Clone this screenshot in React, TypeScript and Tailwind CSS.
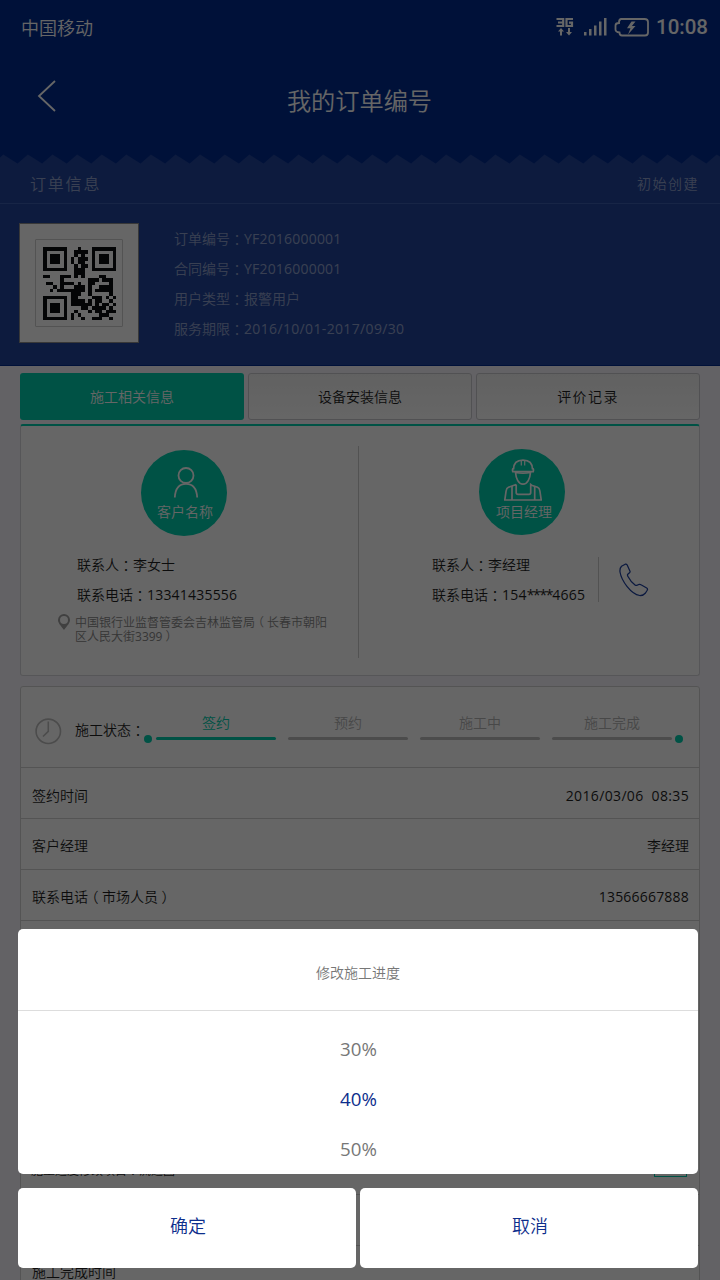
import React from "react";

const QR = [
  "111111100010001111111",
  "100000100111101000001",
  "101110100101001011101",
  "101110101011101011101",
  "101110101011001011101",
  "100000100101101000001",
  "111111100111001111111",
  "000000000111000000000",
  "110001110101000011000",
  "000001000000011101110",
  "011001111010011000010",
  "000101000111010011110",
  "001011111111010111110",
  "000000001110010000010",
  "111111101100001110101",
  "100000101111010110010",
  "101110101111110101101",
  "101110100001101111010",
  "101110100100010110111",
  "100000101010000011100",
  "111111101001001110010",
];

function Colon() {
  return <span className="mx-[0.25em] [font-feature-settings:'halt']">：</span>;
}

function Open() {
  return <span className="mx-[0.25em] [font-feature-settings:'halt']">（</span>;
}

function Close() {
  return <span className="mx-[0.25em] [font-feature-settings:'halt']">）</span>;
}

function Num({ children }: { children: React.ReactNode }) {
  return <span className="font-normal tracking-[0.200px]">{children}</span>;
}

function DateText({ children }: { children: React.ReactNode }) {
  return <span className="font-normal tracking-[0.350px]">{children}</span>;
}

function QrCode() {
  return (
    <div className="flex h-[120px] w-[120px] items-center justify-center border border-[#8c8c8c] bg-white">
      <div className="flex h-[88px] w-[88px] items-center justify-center rounded-[1px] border border-[#d0d0d0]">
        <svg width="73" height="73" viewBox="0 0 21 21" shapeRendering="crispEdges">
          {QR.map((row, y) =>
            row.split("").map((v, x) =>
              v === "1" ? <rect key={`${x}-${y}`} x={x} y={y} width="1.02" height="1.02" fill="#0a0d0f" /> : null
            )
          )}
        </svg>
      </div>
    </div>
  );
}

function zigzag() {
  let d = "M-21 10";
  for (let i = 0; i < 31; i++) {
    const peak = 3.3 + (i - 1) * 24.6;
    d += ` L${peak} 0.5 L${peak + 14.2} 9.6`;
  }
  return d + " L760 12 L-30 12 Z";
}

function StatusIcons() {
  return (
    <svg width="94" height="20" viewBox="0 0 94 20" fill="none" stroke="#fff">
      <g strokeWidth="2.200">
        <path d="M0.5 2H7.200V9H0.500M2 5.500H7" />
        <path d="M17 2H10.500V9H16V5.700H13" />
      </g>
      <g fill="#fff" stroke="none">
        <path d="M5 11l3 3.500H6V18.500H4V14.500H2z" />
        <path d="M13 18.500l3-3.500h-2V11h-2v4h-2z" />
        <path d="M28 15h2.500v3.500H28zM33 12h2.500v6.500H33zM38 8.500h2.500v10H38zM43 4.500h2.500v14H43zM48 1h2.500v17.500H48z" />
        <path d="M75.500 4.500L71 11.300h3.500L72 17.500l7.500-8.500h-3.600L79.500 4.500z" />
      </g>
      <path strokeWidth="1.800" d="M65 2H88.500Q92 2 92 5V15.500Q92 18.500 89 18.500H66Q63.500 18.500 63.500 15.500Q59.500 15 59.500 12.500V8.500Q59.500 6 63 6Q62.800 2.500 65 2Z" />
    </svg>
  );
}

function PersonIcon() {
  return (
    <svg width="28" height="32" viewBox="0 0 28 32" fill="none" stroke="#fff" strokeWidth="1.800">
      <circle cx="14" cy="8.500" r="7.500" />
      <path d="M2.800 30.500C3.300 21 7.500 16.800 14 16.800S24.700 21 25.200 30.500" />
    </svg>
  );
}

function WorkerIcon() {
  return (
    <svg width="38" height="42" viewBox="0 0 38 42" fill="none" stroke="#fff" strokeWidth="1.700">
      <path d="M9.500 10.500C9.500 4 13 1.200 19 1.200S28.500 4 28.500 10.500" />
      <path d="M17.300 1.500V6.500M20.700 1.500V6.500" strokeWidth="1.200" />
      <path d="M9.300 9.700Q8 10 8.800 12.700H29.200Q30 10 28.700 9.700" />
      <path d="M11.500 13.500C12 19.500 14.500 25.200 19 25.200S26 19.500 26.500 13.500Q19 15 11.500 13.500Z" />
      <path d="M12.200 25.500V33.500Q12.200 35.300 14 35.300H25Q26.700 35.300 26.700 33.500V25.500L27.700 26.200L33.500 28.200Q35.500 29 35.900 32L37.200 41H0.800L2.100 32Q2.500 29 4.500 28.200L12.200 25.500" />
      <path d="M8 27V41M30.700 27V41" />
    </svg>
  );
}

function PhoneIcon() {
  return (
    <svg width="30" height="34" viewBox="0 0 30 34" fill="none" stroke="#1c3f9f" strokeWidth="1.250" strokeLinejoin="round">
      <path d="M2.500 3.200L6.200 1.200Q7.500 0.800 8.200 2L11 8.200Q11.300 9.200 10.500 9.800L8.800 11.200Q8.200 12 8.800 13.200C10.500 16.500 13.800 20.300 16.300 22.200Q17.500 22.800 18.500 22L20.300 21.400Q21.200 21.200 22 21.800L27.700 25Q29 25.800 28.200 27.200L26.500 30Q24.500 32.600 20.700 32.500C12 31 2.500 18 1 9Q0.600 5 2.500 3.200Z" />
    </svg>
  );
}

const steps = [
  { name: "签约", on: true },
  { name: "预约", on: false },
  { name: "施工中", on: false },
  { name: "施工完成", on: false },
];

function Row({ label, value, className }: { label: React.ReactNode; value?: React.ReactNode; className: string }) {
  return (
    <div className={`flex h-[51px] shrink-0 items-center justify-between border-t border-[#d3d3d3] pr-[10px] pl-[11px] ${className}`}>
      <span className="h-5 leading-5">{label}</span>
      <span className="h-5 leading-5 whitespace-pre">{value}</span>
    </div>
  );
}

export default function App() {
  return (
    <div
      lang="zh-CN"
      className="relative h-[1280px] w-[720px] overflow-hidden bg-[#f7f5fc] font-['Open_Sans','Noto_Sans_CJK_SC',sans-serif] text-sm font-[350] text-[#1f1f1f]"
    >
      <header className="flex h-[154px] flex-col bg-[#002c90] text-white">
        <div className="flex h-[54px] items-center pr-3 pl-[21px]">
          <span className="pt-[3px] text-[18px]">中国移动</span>
          <span className="ml-auto">
            <StatusIcons />
          </span>
          <span className="ml-[6px] font-['Roboto',sans-serif] text-[20.5px] font-medium leading-6">10:08</span>
        </div>
        <div className="flex h-[92px] items-center">
          <svg className="-mt-[8px] ml-[37px]" width="20" height="32" viewBox="0 0 20 32" fill="none" stroke="#fff" strokeWidth="1.800">
            <path d="M18 1L2 16L18 31" />
          </svg>
          <h1 className="mr-[58px] flex-1 pt-[3px] text-center text-[24.200px] font-[350]">我的订单编号</h1>
        </div>
      </header>

      <section className="flex h-[212px] flex-col border-b border-[#002c90] bg-[#21449b] text-white/50">
        <svg className="block shrink-0 bg-[#002c90]" width="720" height="11" viewBox="0 0 720 11">
          <path d={zigzag()} fill="#21449b" />
        </svg>
        <div className="flex h-[39px] items-center justify-between border-b border-[#3a5cae] pr-[21px] pl-[30px]">
          <span className="text-base tracking-[1.800px]">订单信息</span>
          <span className="tracking-[1.500px]">初始创建</span>
        </div>
        <div className="flex pt-[19px] pl-[19px]">
          <QrCode />
          <div className="mt-px ml-[35px] flex flex-col leading-[30px]">
            <span className="h-[30px]">订单编号<Colon /><Num>YF2016000001</Num></span>
            <span className="h-[30px]">合同编号<Colon /><Num>YF2016000001</Num></span>
            <span className="h-[30px]">用户类型<Colon />报警用户</span>
            <span className="h-[30px]">服务期限<Colon /><DateText>2016/10/01-2017/09/30</DateText></span>
          </div>
        </div>
      </section>

      <main className="flex flex-col px-5 pt-[7px]">
        <nav className="flex h-[47px] gap-1">
          <div className="flex w-[224px] items-center justify-center rounded-[3px] bg-[#00cdad] text-white">施工相关信息</div>
          <div className="flex w-[224px] items-center justify-center rounded-[3px] border border-[#cbcbd0] bg-linear-to-b from-[#f3f3f3] to-white">
            设备安装信息
          </div>
          <div className="flex w-[224px] items-center justify-center rounded-[3px] border border-[#cbcbd0] bg-linear-to-b from-[#f3f3f3] to-white tracking-[1.400px]">
            评价记录
          </div>
        </nav>

        <section className="mt-[4px] flex h-[252px] rounded-[3px] border border-t-2 border-[#d8d8dc] border-t-[#00cdad] bg-white">
          <div className="flex w-[337px] flex-col">
            <div className="mt-[24px] ml-[120px] flex h-[86px] w-[86px] flex-col items-center rounded-full bg-[#00cdad] pt-[17px] text-white">
              <div className="ml-[3px]">
                <PersonIcon />
              </div>
              <span className="ml-[2px] mt-[3px] leading-5">客户名称</span>
            </div>
            <div className="mt-[14px] ml-[56px] flex flex-col leading-[30px]">
              <span className="h-[30px]">联系人<Colon />李女士</span>
              <span className="h-[30px]">联系电话<Colon /><Num>13341435556</Num></span>
            </div>
            <div className="mt-[4px] ml-[37px] flex gap-[5px] text-xs text-[#888]">
              <svg className="shrink-0" width="12" height="17" viewBox="0 0 12 17">
                <path fillRule="evenodd" fill="#a0a0a0" d="M6 0A6 6 0 0 1 12 6C12 9 9 12 6 16C3 12 0 9 0 6A6 6 0 0 1 6 0ZM6 2A4 4 0 1 0 6 10A4 4 0 1 0 6 2Z" />
              </svg>
              <div className="flex flex-col pt-[2px] leading-[14px]">
                <span className="h-[14px]">中国银行业监督管委会吉林监管局<Open />长春市朝阳</span>
                <span className="h-[14px]">区人民大街<span className="font-normal">3399</span><Close /></span>
              </div>
            </div>
          </div>
          <div className="mt-[20px] h-[212px] w-px bg-[#ccc]" />
          <div className="flex flex-1 flex-col">
            <div className="mt-[23px] ml-[120px] flex h-[86px] w-[86px] flex-col items-center rounded-full bg-[#00cdad] pt-[10px] text-white">
              <div className="ml-[2px]">
                <WorkerIcon />
              </div>
              <span className="ml-[4px] mt-px leading-5">项目经理</span>
            </div>
            <div className="mt-[15px] ml-[73px] flex">
              <div className="flex w-[166px] flex-col leading-[30px]">
                <span className="h-[30px]">联系人<Colon />李经理</span>
                <span className="h-[30px] whitespace-nowrap">
                  联系电话<Colon /><Num>154</Num><span className="font-normal tracking-[-1.300px]">****</span><Num>4665</Num>
                </span>
              </div>
              <div className="mt-[7px] h-[45px] w-px bg-[#ccc]" />
              <div className="mt-[13px] ml-[20px]">
                <PhoneIcon />
              </div>
            </div>
          </div>
        </section>

        <section className="mt-[10px] flex h-[620px] flex-col rounded-[3px] border border-[#d3d3d3] bg-white">
          <div className="flex h-[80px] shrink-0 pl-[14px]">
            <svg className="mt-[31px]" width="27" height="27" viewBox="0 0 27 27" fill="none" stroke="#bdbdbd" strokeWidth="1.600">
              <circle cx="13.300" cy="13.300" r="12.200" />
              <path d="M13.300 3.500V13.300L8 18.500" />
            </svg>
            <span className="mt-[33px] ml-[13px] w-[69px] leading-5 whitespace-nowrap">施工状态<Colon /></span>
            <span className="mt-[48px] h-2 w-2 rounded-full bg-[#00cdad]" />
            <div className="mt-[26px] ml-[4px] flex gap-3">
              {steps.map((s) => (
                <div
                  key={s.name}
                  className={
                    s.on
                      ? "flex w-[120px] flex-col items-center leading-5 text-[#00cdad]"
                      : "flex w-[120px] flex-col items-center leading-5 text-[#b4b4b4]"
                  }
                >
                  {s.name}
                  <span className={s.on ? "mt-[4px] h-[3px] w-full rounded-sm bg-[#00cdad]" : "mt-[4px] h-[3px] w-full rounded-sm bg-[#bfbfbf]"} />
                </div>
              ))}
            </div>
            <span className="mt-[48px] ml-[3px] h-2 w-2 rounded-full bg-[#00cdad]" />
          </div>
          <Row className="pt-[6px]" label="签约时间" value={<DateText>2016/03/06  08:35</DateText>} />
          <Row className="pt-[4px]" label="客户经理" value="李经理" />
          <Row className="pt-[4px]" label={<>联系电话<Open />市场人员<Close /></>} value={<Num>13566667888</Num>} />
          <div className="h-[223px] shrink-0 border-t border-[#d3d3d3]" />
          <div className="flex h-[51px] shrink-0 items-start justify-between pr-[12px] pl-[10px] text-xs">
            <span className="mt-[18px] h-5 leading-5">施工进度修改项目<Colon />流进图</span>
            <span className="mt-[14px] h-[20px] w-[33px] border border-[#00cdad]" />
          </div>
          <Row className="" label="" />
          <Row className="pt-[2px]" label="施工完成时间" />
        </section>
      </main>

      <div className="absolute inset-0 bg-black/60" />

      <div className="absolute top-[929px] left-[18px] flex w-[680px] flex-col gap-[14px]">
        <div className="flex h-[245px] flex-col rounded-[5px] bg-white text-[#777]">
          <div className="flex h-[82px] items-center justify-center border-b border-[#ddd] pt-[7px]">修改施工进度</div>
          <ul className="flex flex-col pt-[13px] pl-px text-center text-[18.700px] leading-[50px] font-normal">
            <li>30%</li>
            <li className="text-[#0d2e8c]">40%</li>
            <li>50%</li>
          </ul>
        </div>
        <div className="flex h-20 gap-1 text-lg text-[#0d2e8c]">
          <button className="flex-1 rounded-[5px] bg-white pb-[4px] pl-[2px]">确定</button>
          <button className="flex-1 rounded-[5px] bg-white pb-[4px] pl-[2px]">取消</button>
        </div>
      </div>
    </div>
  );
}
